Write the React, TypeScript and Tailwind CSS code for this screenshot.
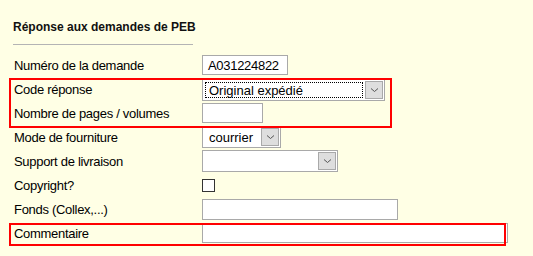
import { FC, ReactNode } from 'react';

const Chevron: FC = () => (
  <svg width="9" height="6" viewBox="0 0 9 6" fill="none">
    <path d="M1 1.5 L4.5 4.5 L8 1.5" stroke="#555" strokeWidth="1" />
  </svg>
);

const Select: FC<{ width: string; value?: string; focused?: boolean }> = ({
  width,
  value,
  focused,
}) => (
  <div
    className={`${width} h-[22px] flex items-center bg-white border border-[#a9a9a9]`}
  >
    <div className="flex-1 h-full p-[2px]">
      <div
        className={`h-full flex items-center px-[4px] ${focused ? 'outline outline-1 outline-dotted outline-black -outline-offset-1' : ''}`}
      >
        {value}
      </div>
    </div>
    <div className="w-[18px] h-[18px] mr-[1px] flex items-center justify-center bg-[#dedede] border border-[#a9a9a9]">
      <Chevron />
    </div>
  </div>
);

const TextBox: FC<{ width: string; value?: string; height?: string }> = ({
  width,
  value,
  height = 'h-[20px]',
}) => (
  <div
    className={`${width} ${height} flex items-center px-[5px] bg-white border border-[#a9a9a9] tracking-[-0.3px]`}
  >
    {value}
  </div>
);

const Row: FC<{ label: string; children: ReactNode }> = ({ label, children }) => (
  <div className="h-[24px] flex items-center">
    <div className="w-[202px] pl-[14px] tracking-[-0.3px]">{label}</div>
    {children}
  </div>
);

const App: FC = () => {
  return (
    <div
      className="w-[533px] h-[256px] bg-[#ffffe5] text-[13px] leading-[15px] text-black overflow-hidden"
      style={{ fontFamily: '"Liberation Sans", Arial, sans-serif' }}
    >
      <div className="pt-[20px] pl-[13px] font-bold text-[12px] text-[#111]">
        Réponse aux demandes de PEB
      </div>
      <div className="ml-[13px] mt-[9px] w-[180px] h-px bg-[#b4b4b4]" />

      <div className="mt-[8px]">
        <Row label="Numéro de la demande">
          <TextBox width="w-[86px]" value="A031224822" />
        </Row>

        <div className="relative">
          <Row label="Code réponse">
            <div className="mt-[2px]">
              <Select width="w-[183px]" value="Original expédié" focused />
            </div>
          </Row>
          <Row label="Nombre de pages / volumes">
            <TextBox width="w-[61px]" />
          </Row>
          <div className="absolute top-[1px] left-[9px] w-[383px] h-[50px] border-2 border-[#ff0000] pointer-events-none" />
        </div>

        <Row label="Mode de fourniture">
          <Select width="w-[79px]" value="courrier" />
        </Row>
        <Row label="Support de livraison">
          <Select width="w-[136px]" />
        </Row>
        <Row label="Copyright?">
          <div className="w-[13px] h-[13px] bg-white border border-[#333]" />
        </Row>
        <Row label="Fonds (Collex,...)">
          <TextBox width="w-[196px]" height="h-[21px]" />
        </Row>

        <div className="relative">
          <Row label="Commentaire">
            <TextBox width="w-[306px]" />
          </Row>
          <div className="absolute top-[2px] left-[9px] w-[497px] h-[23px] border-2 border-[#ff0000] pointer-events-none" />
        </div>
      </div>
    </div>
  );
};

export default App;
